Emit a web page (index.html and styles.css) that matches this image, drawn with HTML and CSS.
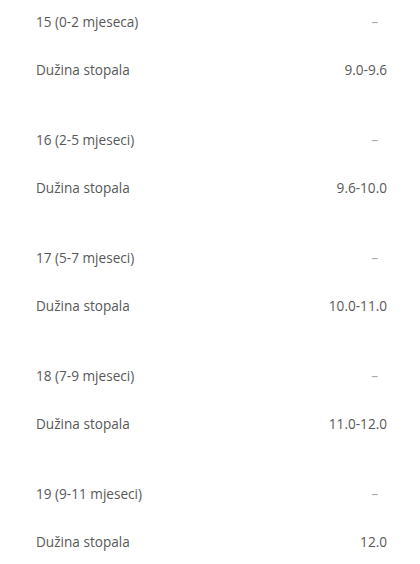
FILE: index.html
```html
<!DOCTYPE html>
<html lang="bs">
<head>
<meta charset="utf-8">
<link rel="stylesheet" href="styles.css">
</head>
<body>
<div class="table">
  <div class="group">
    <div class="row"><span class="label">15 (0-2 mjeseca)</span><span class="dash">–</span></div>
    <div class="row"><span class="label">Dužina stopala</span><span class="value">9.0-9.6</span></div>
  </div>
  <div class="group">
    <div class="row"><span class="label">16 (2-5 mjeseci)</span><span class="dash">–</span></div>
    <div class="row"><span class="label">Dužina stopala</span><span class="value">9.6-10.0</span></div>
  </div>
  <div class="group">
    <div class="row"><span class="label">17 (5-7 mjeseci)</span><span class="dash">–</span></div>
    <div class="row"><span class="label">Dužina stopala</span><span class="value">10.0-11.0</span></div>
  </div>
  <div class="group">
    <div class="row"><span class="label">18 (7-9 mjeseci)</span><span class="dash">–</span></div>
    <div class="row"><span class="label">Dužina stopala</span><span class="value">11.0-12.0</span></div>
  </div>
  <div class="group">
    <div class="row"><span class="label">19 (9-11 mjeseci)</span><span class="dash">–</span></div>
    <div class="row"><span class="label">Dužina stopala</span><span class="value">12.0</span></div>
  </div>
</div>
</body>
</html>
```
FILE: styles.css
```css
html, body {
  margin: 0;
  padding: 0;
  background: #fff;
}
body {
  font-family: "Open Sans", "Liberation Sans", sans-serif;
  font-size: 13.6px;
  color: #585858;
}
.table {
  display: flex;
  flex-direction: column;
  gap: 28px;
  padding: 0 33px 0 36px;
}
.group {
  display: flex;
  flex-direction: column;
  gap: 6px;
}
.row {
  height: 42px;
  display: flex;
  align-items: center;
  justify-content: space-between;
}
.dash {
  color: #aaa;
  margin-right: 9px;
}
```
